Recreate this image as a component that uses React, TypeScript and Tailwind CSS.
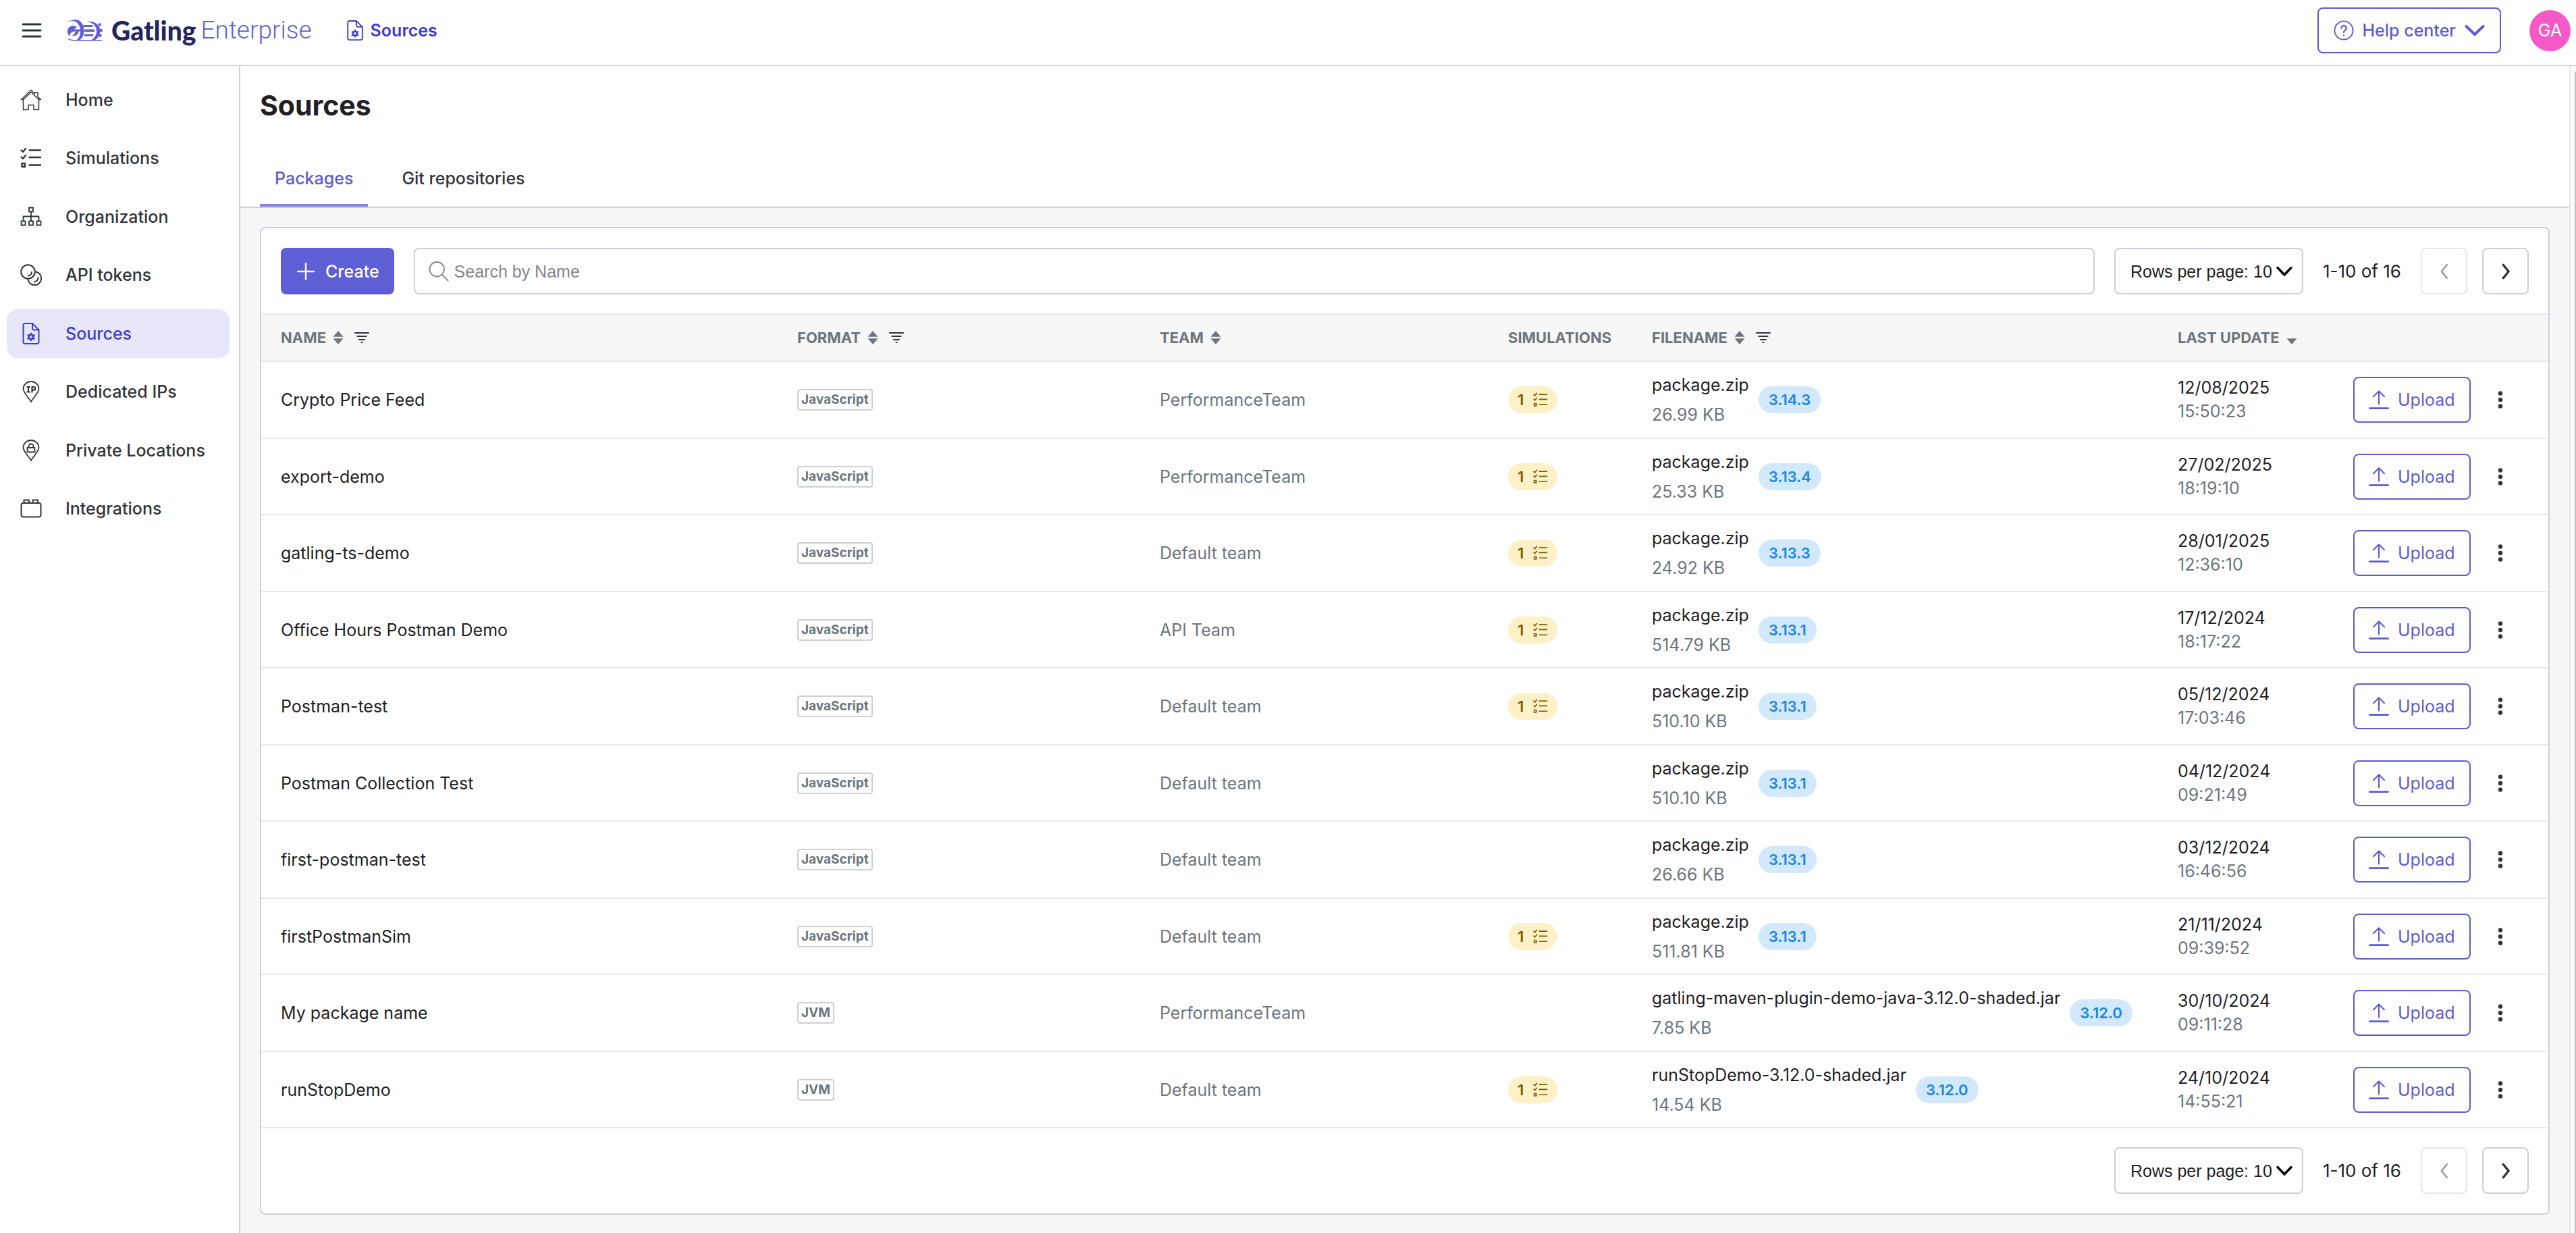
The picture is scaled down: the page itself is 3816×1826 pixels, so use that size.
import React from "react";

interface Source {
  name: string;
  format: string;
  team: string;
  simulations: number;
  file: string;
  size: string;
  version: string;
  date: string;
  time: string;
}

const js = "JavaScript";
const zip = "package.zip";

const sources: Source[] = [
  { name: "Crypto Price Feed", format: js, team: "PerformanceTeam", simulations: 1, file: zip, size: "26.99 KB", version: "3.14.3", date: "12/08/2025", time: "15:50:23" },
  { name: "export-demo", format: js, team: "PerformanceTeam", simulations: 1, file: zip, size: "25.33 KB", version: "3.13.4", date: "27/02/2025", time: "18:19:10" },
  { name: "gatling-ts-demo", format: js, team: "Default team", simulations: 1, file: zip, size: "24.92 KB", version: "3.13.3", date: "28/01/2025", time: "12:36:10" },
  { name: "Office Hours Postman Demo", format: js, team: "API Team", simulations: 1, file: zip, size: "514.79 KB", version: "3.13.1", date: "17/12/2024", time: "18:17:22" },
  { name: "Postman-test", format: js, team: "Default team", simulations: 1, file: zip, size: "510.10 KB", version: "3.13.1", date: "05/12/2024", time: "17:03:46" },
  { name: "Postman Collection Test", format: js, team: "Default team", simulations: 0, file: zip, size: "510.10 KB", version: "3.13.1", date: "04/12/2024", time: "09:21:49" },
  { name: "first-postman-test", format: js, team: "Default team", simulations: 0, file: zip, size: "26.66 KB", version: "3.13.1", date: "03/12/2024", time: "16:46:56" },
  { name: "firstPostmanSim", format: js, team: "Default team", simulations: 1, file: zip, size: "511.81 KB", version: "3.13.1", date: "21/11/2024", time: "09:39:52" },
  { name: "My package name", format: "JVM", team: "PerformanceTeam", simulations: 0, file: "gatling-maven-plugin-demo-java-3.12.0-shaded.jar", size: "7.85 KB", version: "3.12.0", date: "30/10/2024", time: "09:11:28" },
  { name: "runStopDemo", format: "JVM", team: "Default team", simulations: 1, file: "runStopDemo-3.12.0-shaded.jar", size: "14.54 KB", version: "3.12.0", date: "24/10/2024", time: "14:55:21" },
];

interface IconProps {
  className?: string;
  strokeWidth?: number;
  children?: React.ReactNode;
}

const Icon = ({ className = "size-8", strokeWidth = 2, children }: IconProps) => (
  <svg
    viewBox="0 0 32 32"
    className={`shrink-0 ${className}`}
    fill="none"
    stroke="currentColor"
    strokeWidth={strokeWidth}
    strokeLinecap="round"
    strokeLinejoin="round"
    aria-hidden="true"
  >
    {children}
  </svg>
);

const HomeIcon = () => (
  <Icon strokeWidth={1.5}>
    <path d="M1.5 15.500 16 1.500l5.500 5.300V5h4.500v6.200l4.500 4.300h-3L16 4.500 4.500 15.500z" />
    <path d="M4.500 15.500v15H12v-7h8v7h7.500v-15" />
  </Icon>
);

const ListIcon = ({ className }: IconProps) => (
  <Icon className={className} strokeWidth={2.4}>
    <path d="M1.500 4.500 4 7l4-5M1.500 14.500 4 17l4-5M2.500 24h4.500v5h-4.500zM13.500 4.500h16.500M13.500 15h16.500M13.500 26.500h16.500" />
  </Icon>
);

const OrgIcon = () => (
  <Icon strokeWidth={1.8}>
    <path d="M13 2.500h6v6h-6zM16 8.500v13.500M4.500 22v-6.500h23V22M1.500 22.500h6v6h-6zM13 22.500h6v6h-6zM24.500 22.500h6v6h-6z" />
  </Icon>
);

const TokensIcon = () => (
  <Icon strokeWidth={2}>
    <circle cx="11.500" cy="11.500" r="10.300" />
    <path d="M22.200 11.300a10 10 0 1 1-11 10.600M17 12a6 6 0 0 1-5 5.500M26.500 20a7 7 0 0 1-5.500 6.500" />
  </Icon>
);

const SourceIcon = ({ className }: IconProps) => (
  <Icon className={className} strokeWidth={2}>
    <path d="M18 1H7a2.500 2.500 0 0 0-2.500 2.500v25A2.500 2.500 0 0 0 7 31h18a2.500 2.500 0 0 0 2.500-2.500V10.500zM18 1v7a2.500 2.500 0 0 0 2.500 2.500h7" />
    <path
      d="M16 14.700l2.100 2.700 3.400.45L20.200 21l1.300 3.150-3.400.45L16 27.300l-2.100-2.700-3.400-.45L11.800 21l-1.300-3.150 3.400-.45zM18.200 21a2.200 2.200 0 1 0-4.400 0 2.200 2.200 0 0 0 4.400 0z"
      fill="currentColor"
      fillRule="evenodd"
      strokeWidth="0.6"
    />
  </Icon>
);

const pinPath = "M16 31C13 25 4.500 18 4.500 11.800a11.500 10.800 0 0 1 23 0C27.500 18 19 25 16 31z";

const IpPinIcon = () => (
  <Icon strokeWidth={1.8}>
    <path d={pinPath} />
    <path d="M12 9v7.500M10.500 9h3M10.500 16.500h3M17.500 16.500V9h2.500a2.200 2.200 0 0 1 0 4.600h-2.500" strokeWidth="2.200" strokeLinecap="square" />
  </Icon>
);

const LockPinIcon = () => (
  <Icon strokeWidth={1.8}>
    <path d={pinPath} />
    <path d="M10.500 12h11v6.500h-11zM12.500 12V10a3.500 3.500 0 0 1 7 0v2" />
  </Icon>
);

const IntegrationsIcon = () => (
  <Icon>
    <rect x="1.500" y="8" width="29" height="20.500" rx="3" />
    <path d="M5.500 8V3.500h7.500V8M18.500 8V3.500H26V8" />
  </Icon>
);

const UploadIcon = () => (
  <Icon className="size-[30px]" strokeWidth={2.2}>
    <path d="M16 23V2.500M7.500 11 16 2.500l8.500 8.500" />
    <path d="M1.500 29.500h29" strokeWidth="2.800" />
  </Icon>
);

const LogoMark = () => (
  <svg viewBox="0 0 54 32" className="h-8 w-[54px] shrink-0" aria-hidden="true" fill="#5f5fd8">
    <path d="M0 5C4 1.500 9 0 13 0c7 0 12.500 7 12.500 16 0 6.500-2.500 11.500-6.500 14.500h-5c4-2.500 6.500-8 6-14.500C19.500 8 15 2.500 9 2 5 2 2 3.500 0 5z" />
    <path d="M15 11.500C13 9.500 11 9 9.500 9 4.500 9 1 13 1 17.500c0 3 1 5.500 3 7C4.500 20.500 7 18 10.500 17.500h2.500c-1 3-2.500 5-5 6.500 5 1 9-2 9.500-6.500h6v-3H11c1-1.500 2.500-2.500 4-3z" />
    <path d="M29.500 3C41 1.500 49.500 8 49.500 16.500c0 6-3.500 11.500-8 14h-6c5-2.500 8.800-7.500 8.500-14C43.500 9 38 4 29.500 3z" />
    <path d="M24 8h13a1.500 1.500 0 0 1 0 3H25.500zM26 14.500h14a1.800 1.800 0 0 1 0 3.500H26zM26.500 21.500H38a1.500 1.500 0 0 1 0 3H25z" />
    <path d="M46 6l3.500-1 1.500 3.500-3 1.500zM49 14h3.500v4H49zM48.500 21.500l3.500 1-1.500 3.500-3.500-1z" />
    <path d="M0 27.500c4 2.300 8 2.500 14 2.500h40c-2 1-4 1.500-7 1.500H12c-6 0-10-1.500-12-4z" />
  </svg>
);

const navItems = [
  { label: "Home", icon: <HomeIcon /> },
  { label: "Simulations", icon: <ListIcon /> },
  { label: "Organization", icon: <OrgIcon /> },
  { label: "API tokens", icon: <TokensIcon /> },
  { label: "Sources", icon: <SourceIcon />, active: true },
  { label: "Dedicated IPs", icon: <IpPinIcon /> },
  { label: "Private Locations", icon: <LockPinIcon /> },
  { label: "Integrations", icon: <IntegrationsIcon /> },
];

const Header = () => (
  <header className="flex h-[98px] items-start justify-between border-b-2 border-[#cfcfd6] bg-white pr-2">
    <div className="flex h-[90px] items-center pl-8">
      <button type="button" aria-label="Toggle menu">
        <svg viewBox="0 0 30 22" className="h-[22px] w-[30px]" stroke="#333437" strokeWidth="3" strokeLinecap="round" aria-hidden="true">
          <path d="M2 2h26M2 11h26M2 20h26" />
        </svg>
      </button>
      <a href="#home" className="ml-[37px] flex items-center">
        <LogoMark />
        <span className="ml-3 font-['Lato',sans-serif] text-[39px] font-black text-[#24265d]">Gatling</span>
        <span className="ml-[7px] font-['Roboto',sans-serif] text-[37px] font-light text-[#5f5fd8]">Enterprise</span>
      </a>
      <a href="#sources" className="ml-[49px] flex items-center gap-2 font-semibold text-[#3f3bcf]">
        <SourceIcon className="size-[30px]" />
        Sources
      </a>
    </div>
    <div className="flex h-[90px] items-center gap-[42px]">
      <button type="button" className="flex h-[68px] items-center gap-[13px] rounded-lg border-2 border-[#5d5bd4] px-[22px] font-medium text-[#5d5bd4]">
        <Icon className="size-[30px]">
          <circle cx="16" cy="16" r="14.500" />
          <path d="M12 12.500a4 4 0 1 1 6 3.500c-1.500.8-2 1.500-2 3.200M16 23.500v.4" strokeWidth="2.400" />
        </Icon>
        Help center
        <svg viewBox="0 0 30 18" className="h-[18px] w-[30px]" fill="none" stroke="currentColor" strokeWidth="4" strokeLinecap="round" aria-hidden="true">
          <path d="M2.500 3 15 15 27.500 3" />
        </svg>
      </button>
      <div className="flex size-[61px] items-center justify-center rounded-full bg-[#f75ac8] text-white">GA</div>
    </div>
  </header>
);

const Sidebar = () => (
  <nav className="w-[356px] shrink-0 border-r-2 border-[#cfcfd6] bg-white">
    <ul className="mt-[14px] flex h-[677px] flex-col justify-between pr-[14px] pl-[10px]">
      {navItems.map((item) => (
        <li key={item.label}>
          <a
            href="#nav"
            className={`flex h-[72px] items-center gap-[35px] rounded-2xl pl-5 font-medium ${
              item.active ? "bg-[#e8e6f9] text-[#3f3bcf]" : "text-[#333437]"
            }`}
          >
            {item.icon}
            {item.label}
          </a>
        </li>
      ))}
    </ul>
  </nav>
);

const Pagination = () => (
  <div className="flex shrink-0 items-center">
    <div className="relative">
      <select
        aria-label="Rows per page"
        className="h-[69px] w-[280px] appearance-none rounded-lg border-2 border-[#cfcfd6] bg-white pl-[22px] font-['Liberation_Sans',sans-serif] text-[#1f2023]"
      >
        <option>Rows per page: 10</option>
      </select>
      <svg viewBox="0 0 24 16" className="pointer-events-none absolute top-[27px] right-4 h-4 w-6" fill="none" stroke="#000" strokeWidth="3.500" strokeLinecap="round" aria-hidden="true">
        <path d="M2 2.500 12 13 22 2.500" />
      </svg>
    </div>
    <span className="mx-[29px] text-[26px] text-[#1f2023]">1-10 of 16</span>
    <button type="button" disabled aria-label="Previous page" className="mr-[22px] flex size-[69px] items-center justify-center rounded-lg border-2 border-[#e8e8eb] text-[#9a9a9d]">
      <Icon className="size-6" strokeWidth={3.5}>
        <path d="M21 3 10.500 16 21 29" />
      </Icon>
    </button>
    <button type="button" aria-label="Next page" className="flex size-[69px] items-center justify-center rounded-lg border-2 border-[#cfcfd6] text-[#333437]">
      <Icon className="size-6" strokeWidth={4.5}>
        <path d="M11 3l10.500 13L11 29" />
      </Icon>
    </button>
  </div>
);

interface ColumnProps {
  label: string;
  sort?: "both" | "desc";
  filter?: boolean;
}

const Column = ({ label, sort, filter }: ColumnProps) => (
  <th scope="col" className="h-[70px] border-y-2 border-[#e8e8eb] pl-[29px] text-left">
    <span className="flex items-center text-[22px] font-bold text-[#6c757d]">
      {label}
      {sort && (
        <svg viewBox="0 0 16 20" className="ml-[10px] h-5 w-4" fill="currentColor" aria-hidden="true">
          {sort === "both" && <path d="M8 0l7.500 8.800H.5z" />}
          <path d="M8 20l7.500-8.800H.5z" />
        </svg>
      )}
      {filter && (
        <svg viewBox="0 0 22 18" className="ml-4 h-[18px] w-[22px]" stroke="#333437" strokeWidth="2.200" strokeLinecap="round" aria-hidden="true">
          <path d="M1 2h20M4.500 7h13M7 12h8M10.500 16h1" />
        </svg>
      )}
    </span>
  </th>
);

const SourceRow = ({ source }: { source: Source }) => (
  <tr className="border-b-2 border-[#e8e8eb] odd:h-[114px] even:h-[113px]">
    <td className="pl-[29px] text-[#1f2023]">{source.name}</td>
    <td className="pl-[29px]">
      <span className="flex h-8 w-fit items-center rounded-sm border-2 border-[#cfcfd6] px-1 text-[19px] font-bold">{source.format}</span>
    </td>
    <td className="pl-[29px]">{source.team}</td>
    <td className="pl-[29px]">
      {source.simulations > 0 && (
        <span className="flex h-10 w-fit items-center gap-[14px] rounded-full bg-[#fef0c7] px-[14px] text-[22px] font-semibold text-[#7d5d00]">
          {source.simulations}
          <ListIcon className="size-[22px]" />
        </span>
      )}
    </td>
    <td className="pl-[29px]">
      <div className="flex items-center gap-[14px]">
        <div className="leading-[44px]">
          <p className="text-[#1f2023]">{source.file}</p>
          <p>{source.size}</p>
        </div>
        <span className="flex h-10 items-center rounded-full bg-[#d2e8fb] px-[15px] text-[22px] font-semibold text-[#1c86e0]">{source.version}</span>
      </div>
    </td>
    <td className="pl-[29px] leading-[35px]">
      <p className="text-[#1f2023]">{source.date}</p>
      <p>{source.time}</p>
    </td>
    <td className="pl-[29px]">
      <div className="flex items-center gap-8">
        <button type="button" className="flex h-[68px] items-center gap-[13px] rounded-lg border-2 border-[#5d5bd4] px-[21px] text-[#5d5bd4]">
          <UploadIcon />
          Upload
        </button>
        <button type="button" aria-label="More actions" className="px-2">
          <svg viewBox="0 0 8 26" className="h-[26px] w-2" fill="#333437" aria-hidden="true">
            <circle cx="4" cy="3.500" r="3.200" />
            <circle cx="4" cy="13" r="3.200" />
            <circle cx="4" cy="22.500" r="3.200" />
          </svg>
        </button>
      </div>
    </td>
  </tr>
);

const SourcesTable = () => (
  <table className="w-full table-fixed border-collapse text-[#6c757d]">
    <colgroup>
      <col />
      <col className="w-[537px]" />
      <col className="w-[516px]" />
      <col className="w-[213px]" />
      <col className="w-[779px]" />
      <col className="w-[260px]" />
      <col className="w-[318px]" />
    </colgroup>
    <thead className="bg-[#f7f7f7]">
      <tr>
        <Column label="NAME" sort="both" filter />
        <Column label="FORMAT" sort="both" filter />
        <Column label="TEAM" sort="both" />
        <Column label="SIMULATIONS" />
        <Column label="FILENAME" sort="both" filter />
        <Column label="LAST UPDATE" sort="desc" />
        <th className="border-y-2 border-[#e8e8eb]" aria-label="Actions" />
      </tr>
    </thead>
    <tbody>
      {sources.map((source) => (
        <SourceRow key={source.name} source={source} />
      ))}
    </tbody>
  </table>
);

export default function App() {
  return (
    <div className="flex min-h-screen flex-col bg-[#f7f7f7] font-['Inter',sans-serif] text-[25px] leading-9">
      <Header />
      <div className="flex flex-1">
        <Sidebar />
        <main className="min-w-0 flex-1">
          <div className="border-b-2 border-[#cfcfd6] bg-white pl-[29px]">
            <h1 className="pt-8 text-[41px] leading-[52px] font-bold text-[#1f2023]">Sources</h1>
            <div role="tablist" className="mt-[44px] flex">
              <button type="button" role="tab" aria-selected="true" className="h-20 border-b-4 border-[#8583de] px-[22px] font-medium text-[#5d5bd4]">
                Packages
              </button>
              <button type="button" role="tab" aria-selected="false" className="ml-7 h-20 border-b-4 border-transparent px-[22px] font-medium text-[#333437]">
                Git repositories
              </button>
            </div>
          </div>
          <section className="mx-[29px] mt-7 mb-[26px] overflow-hidden rounded-lg border-2 border-[#cfcfd6] bg-white">
            <div className="flex items-center gap-[29px] px-[29px] pt-[29px] pb-7">
              <button type="button" className="flex h-[69px] shrink-0 items-center gap-4 rounded-lg bg-[#5f5fd5] pr-[22px] pl-6 font-medium text-white">
                <Icon className="size-[26px]" strokeWidth={3}>
                  <path d="M16 1.500v29M1.500 16h29" />
                </Icon>
                Create
              </button>
              <label className="flex h-[69px] min-w-0 flex-1 items-center gap-2 rounded-lg border-2 border-[#cfcfd6] px-5 text-[#85878c]">
                <Icon className="size-[30px]">
                  <circle cx="13" cy="12.500" r="11.500" />
                  <path d="m21.500 21.500 9 9" />
                </Icon>
                <input
                  type="text"
                  placeholder="Search by Name"
                  aria-label="Search by Name"
                  className="w-full font-['Liberation_Sans',sans-serif] outline-none placeholder:text-[#85878c]"
                />
              </label>
              <Pagination />
            </div>
            <SourcesTable />
            <div className="flex justify-end px-[29px] pt-7 pb-[29px]">
              <Pagination />
            </div>
          </section>
        </main>
        <div className="flex w-[10px] shrink-0 justify-end border-l-2 border-[#e8e8e8] bg-[#fafafa] pt-2">
          <div className="w-0.5 rounded-tl-full bg-[#c1c1c1]" />
        </div>
      </div>
    </div>
  );
}
